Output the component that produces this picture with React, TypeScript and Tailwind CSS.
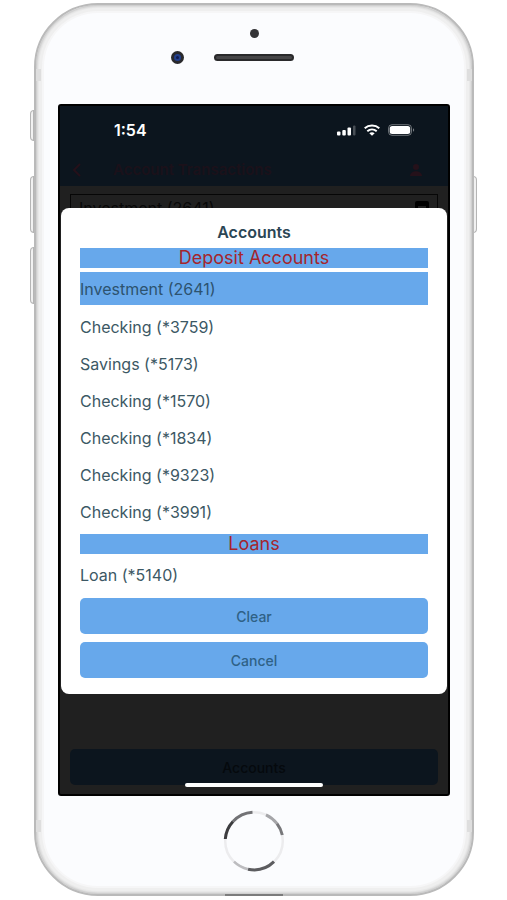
const deposits = [
  "Checking (*3759)",
  "Savings (*5173)",
  "Checking (*1570)",
  "Checking (*1834)",
  "Checking (*9323)",
  "Checking (*3991)",
];

function StatusIcons() {
  return (
    <div className="flex items-center gap-2 text-white">
      <svg width="20" height="12" viewBox="0 0 20 12" fill="currentColor" aria-hidden="true">
        <rect x="1" y="7.500" width="3.500" height="4" rx="1" />
        <rect x="6.300" y="6" width="3.500" height="5.500" rx="1" />
        <rect x="11.500" y="3.500" width="3.500" height="8" rx="1" />
        <rect x="17" y="1.500" width="2.500" height="10" rx="1" opacity="0.25" />
      </svg>
      <svg width="16" height="12" viewBox="0 0 16 12" fill="none" stroke="currentColor" strokeWidth="2" aria-hidden="true">
        <path d="M0.7 4.3C4.8 0.7 11.2 0.7 15.3 4.3" />
        <path d="M3.3 7.200C6 4.900 10 4.900 12.7 7.200" />
        <path d="M5.3 9.200C6.9 8 9.1 8 10.7 9.200L8 11.8Z" fill="currentColor" stroke="none" />
      </svg>
      <svg width="27" height="12" viewBox="0 0 27 12" aria-hidden="true">
        <rect x="0.5" y="0.7" width="23" height="10.6" rx="3.5" fill="none" stroke="#fff" strokeOpacity="0.4" />
        <rect x="1.7" y="1.9" width="20.500" height="8.200" rx="2.5" fill="#fff" />
        <path d="M25 4.2C26.6 4.8 26.6 7.2 25 7.8Z" fill="#fff" opacity="0.45" />
      </svg>
    </div>
  );
}

function SectionHeading({ children }: { children: string }) {
  return (
    <h3 className="flex h-5 items-center justify-center bg-[#67a8eb] text-[18px] leading-5 text-[#a5252c]">
      {children}
    </h3>
  );
}

function AccountRow({ label }: { label: string }) {
  return (
    <li>
      <button type="button" className="flex h-[37px] w-full items-center text-left">
        {label}
      </button>
    </li>
  );
}

function AccountsDialog() {
  return (
    <div
      role="dialog"
      aria-labelledby="dialog-title"
      className="absolute inset-x-px top-[102px] rounded-lg bg-white px-[19px] pt-4 pb-4 text-[16px] text-[#3c5864]"
    >
      <h2 id="dialog-title" className="mb-2 text-center text-[16px] leading-4 font-semibold text-[#2b4655]">
        Accounts
      </h2>
      <SectionHeading>Deposit Accounts</SectionHeading>
      <ul className="mt-1 mb-1">
        <li className="mb-[3px]">
          <button
            type="button"
            aria-pressed="true"
            className="flex h-[33px] w-full items-center bg-[#67a8eb] text-left text-[#2d536f]"
          >
            Investment (2641)
          </button>
        </li>
        {deposits.map((label) => (
          <AccountRow key={label} label={label} />
        ))}
      </ul>
      <SectionHeading>Loans</SectionHeading>
      <ul className="mt-[2px] mb-[5px]">
        <AccountRow label="Loan (*5140)" />
      </ul>
      <div className="flex flex-col gap-2 text-[14px] font-medium text-[#2f6186]">
        <button type="button" className="h-9 rounded-[5px] bg-[#67a8eb]">Clear</button>
        <button type="button" className="h-9 rounded-[5px] bg-[#67a8eb]">Cancel</button>
      </div>
    </div>
  );
}

function Screen() {
  return (
    <main className="relative flex h-[692px] flex-col overflow-hidden rounded-[3px] border-2 border-black bg-[#202020]">
      <header className="bg-[#0c151e]">
        <div className="flex h-[48px] items-center justify-between pr-[33px] pl-[54px]">
          <time className="text-[16px] font-semibold text-white">1:54</time>
          <StatusIcons />
        </div>
        <div className="flex h-8 items-center pr-[25px] pl-[13px] text-[#25111a]">
          <button type="button" aria-label="Back" className="mr-8">
            <svg width="8" height="14" viewBox="0 0 8 14" fill="none" stroke="currentColor" strokeWidth="2">
              <path d="M7 1L1 7L7 13" />
            </svg>
          </button>
          <h1 className="flex-1 text-[15px] font-semibold text-[#1b111a]">Account Transactions</h1>
          <button type="button" aria-label="Profile">
            <svg width="14" height="14" viewBox="0 0 14 14" fill="currentColor">
              <circle cx="7" cy="4" r="3" />
              <path d="M1 13C1 6.500 13 6.500 13 13Z" />
            </svg>
          </button>
        </div>
      </header>
      <div className="mx-[10px] mt-2 flex h-7 items-center justify-between border border-black/80 px-2 text-[16px] text-[#080808]">
        <span>Investment (2641)</span>
        <span className="flex h-3.5 w-3.5 items-center justify-center rounded-[2px] bg-black">
          <span className="h-1 w-2 bg-[#202020]" />
        </span>
      </div>
      <div className="mt-auto mb-[9px] px-[10px]">
        <button type="button" className="h-9 w-full rounded-[5px] bg-[#0c151e] text-[14px] font-medium text-[#05090d]">
          Accounts
        </button>
      </div>
      <div className="absolute bottom-[7px] left-1/2 h-1 w-[138px] -translate-x-1/2 rounded-full bg-white" />
      <AccountsDialog />
    </main>
  );
}

function HomeButton() {
  return (
    <button type="button" aria-label="Home" className="mt-[14px] self-center rounded-full">
      <svg width="62" height="62" viewBox="0 0 62 62" fill="none" strokeWidth="2.5">
        <circle cx="31" cy="31" r="28.800" stroke="#ececee" />
        <path d="M2.300 29A28.800 28.800 0 0 1 10 11.500" stroke="#3c3c3f" strokeWidth="3" />
        <path d="M10 11.500A28.800 28.800 0 0 1 29.500 2.200" stroke="#727275" strokeWidth="3" />
        <path d="M43 4.800A28.800 28.800 0 0 1 54 13.700" stroke="#a5a5a8" strokeWidth="3" />
        <path d="M54 13.700A28.800 28.800 0 0 1 59.300 25" stroke="#77777a" strokeWidth="3" />
        <path d="M51 51.700A28.800 28.800 0 0 1 25 59.200" stroke="#5c5c5f" strokeWidth="3" />
        <path d="M25 59.200A28.800 28.800 0 0 1 11 51.700" stroke="#bcbcbf" />
      </svg>
    </button>
  );
}

function SideKey({ place }: { place: string }) {
  return <div aria-hidden="true" className={"absolute w-1 border border-[#b5b5b5] bg-[#f1f1f1] " + place} />;
}

export default function App() {
  return (
    <div className="bg-white pt-[3px] pr-[33px] pb-1 pl-[34px] font-['Inter','Liberation_Sans',sans-serif]">
      <div className="relative">
        <SideKey place="-left-1 top-[107px] h-[31px] rounded-l-sm" />
        <SideKey place="-left-1 top-[173px] h-[57px] rounded-l-sm" />
        <SideKey place="-left-1 top-[244px] h-[57px] rounded-l-sm" />
        <SideKey place="-right-[3px] top-[173px] h-[57px] rounded-r-sm" />
        <div className="relative flex flex-col rounded-[64px] border-2 border-[#bababa] bg-[#fbfcfe] px-[22px] pb-[22px] shadow-[inset_0_0_0_1px_#d0d0d0,inset_0_0_0_2px_#dedede,inset_0_0_0_3px_#e8e8e8,inset_0_0_0_6px_#efefef,inset_0_0_0_8px_#f6f6f7]">
          <div className="relative flex h-[99px] flex-col items-center pt-6">
            <div className="h-[9px] w-[9px] rounded-full bg-[#343436]" />
            <div className="mt-[16px] h-[7px] w-20 rounded-full border-2 border-[#29292b] bg-[#454547]" />
            <div className="absolute top-[46px] left-1/2 -ml-[83px] flex h-[13px] w-[13px] items-center justify-center rounded-full bg-[#29292c]">
              <div className="flex h-[7px] w-[7px] items-center justify-center rounded-full bg-[#23408c]">
                <div className="h-[3px] w-[3px] rounded-full bg-[#101c50]" />
              </div>
            </div>
          </div>
          <Screen />
          <HomeButton />
          <div className="absolute top-[64px] left-0 h-3 w-[5px] bg-[#dedede]" />
          <div className="absolute top-[64px] right-0 h-3 w-[5px] bg-[#dedede]" />
          <div className="absolute bottom-[62px] left-0 h-3 w-[5px] bg-[#dedede]" />
          <div className="absolute right-0 bottom-[62px] h-3 w-[5px] bg-[#dedede]" />
          <div className="absolute -bottom-[2px] left-1/2 h-[2px] w-[58px] -translate-x-1/2 bg-[#7c7c7c]" />
        </div>
      </div>
    </div>
  );
}
